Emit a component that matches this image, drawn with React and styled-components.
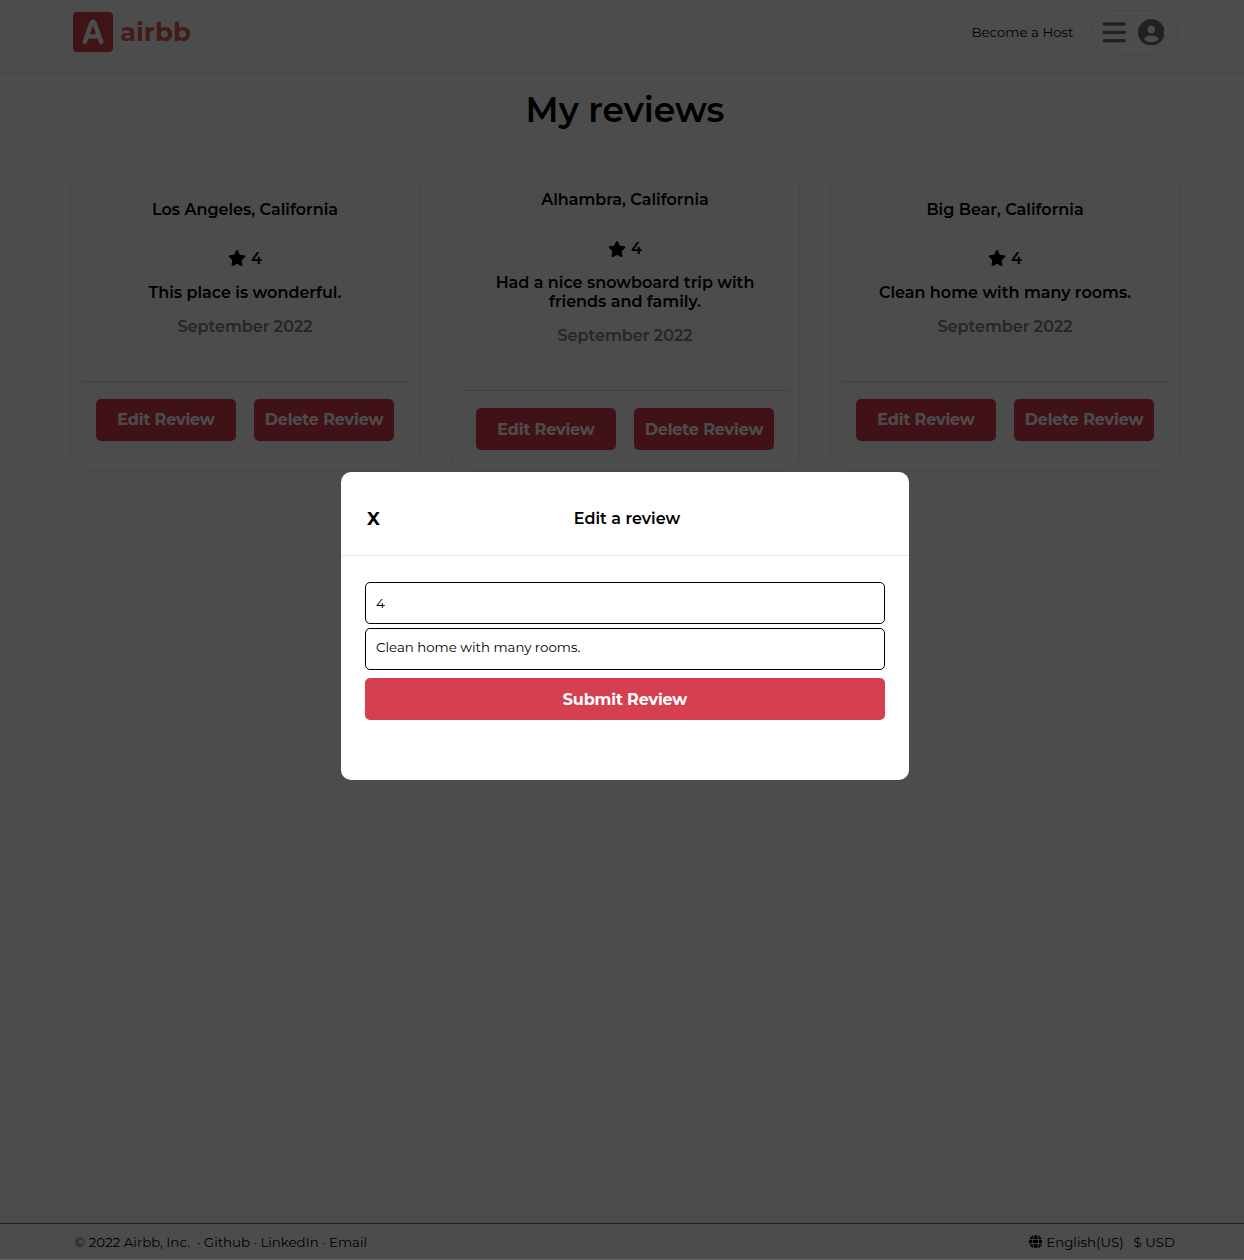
import React from "react";
import styled, { createGlobalStyle } from "styled-components";
import { FaBars, FaCircleUser, FaGlobe, FaStar } from "react-icons/fa6";

const fontStack = `Montserrat, Inter, "Liberation Sans", sans-serif`;

const GlobalStyle = createGlobalStyle`
  *, *::before, *::after { box-sizing: border-box; }
  html { overflow: hidden; }
  body {
    margin: 0;
    background: #666;
    color: #000;
    font-family: ${fontStack};
  }
  h1, h2, p { margin: 0; }
`;

const Page = styled.div`
  display: flex;
  flex-direction: column;
  width: 1250px;
  height: 1259px;
  background: #fff;
`;

const Header = styled.header`
  display: flex;
  justify-content: space-between;
  align-items: flex-start;
  height: 73px;
  padding: 10px 72px 0 73px;
  border-bottom: 1px solid #e9e9e9;
`;

const Brand = styled.a`
  display: flex;
  align-items: center;
  gap: 7px;
  height: 40px;
  margin-top: 2px;
  color: #dc5f58;
  font-size: 26px;
  font-weight: 700;
  line-height: 40px;
`;

const HeaderActions = styled.div`
  display: flex;
  gap: 10px;
`;

const HostLink = styled.button`
  display: flex;
  align-items: center;
  justify-content: center;
  width: 115px;
  height: 46px;
  padding: 0 0 2px;
  border: 0;
  border-radius: 20px;
  box-shadow: 0 1px 0 #efefef;
  background: transparent;
  color: #000;
  font: 400 13.33px ${fontStack};
`;

const UserMenu = styled.button`
  display: flex;
  align-items: center;
  gap: 10px;
  width: 88px;
  height: 45px;
  padding: 0 0 1px 10px;
  border: 1px solid #ebebeb;
  border-radius: 23px;
  background: transparent;
  color: #717171;
  font-size: 26.67px;
`;

const Main = styled.main`
  flex: 1;
`;

const Title = styled.h1`
  padding-top: 15px;
  font-size: 34.67px;
  font-weight: 600;
  line-height: 43px;
  text-align: center;
`;

const Reviews = styled.section`
  display: grid;
  grid-template-columns: repeat(3, 350px);
  justify-content: center;
  gap: 30px;
  margin-top: 40px;
`;

const Card = styled.article`
  display: flex;
  flex-direction: column;
  align-items: center;
  justify-content: center;
  height: 300px;
  padding: 0 10px 1.4px;
  border: 1px solid #ececec;
  border-radius: 15px;
  font-size: 16px;
  font-weight: 600;
  line-height: 19px;
  text-align: center;
`;

const Place = styled.h2`
  font-size: 16px;
  font-weight: 600;
`;

const Rating = styled.div`
  display: flex;
  align-items: center;
  gap: 5px;
  height: 19px;
  margin-top: 30px;

  svg { width: 18px; height: 16px; }
`;

const ReviewText = styled.p`
  width: 280px;
  margin: 15px 0;
`;

const ReviewDate = styled.p`
  color: #808080;
`;

const CardActions = styled.div`
  display: flex;
  justify-content: center;
  gap: 18px;
  width: 100%;
  margin-top: 45px;
  padding-top: 17px;
  border-top: 1px solid #dadada;
`;

const Button = styled.button`
  display: flex;
  align-items: center;
  justify-content: center;
  width: ${(p) => (p.$wide ? "100%" : "140px")};
  height: 42px;
  padding: 0;
  border: 0;
  border-radius: 5px;
  background: #d63f4f;
  color: #fff;
  font: 700 16px/19px ${fontStack};
  letter-spacing: -0.15px;
`;

const Footer = styled.footer`
  display: flex;
  justify-content: space-between;
  height: 36px;
  padding: 1px 75px 0 74.5px;
  border-top: 1px solid #6b6b6b;
  font-size: 13.33px;
`;

const FooterGroup = styled.div`
  display: flex;
  align-items: center;
  gap: ${(p) => p.$gap}px;
`;

const Dot = styled.span`
  margin-left: ${(p) => p.$lead || 0}px;
  width: 3px;
  text-align: center;
`;

const Backdrop = styled.div`
  position: fixed;
  top: 0;
  left: 0;
  display: flex;
  justify-content: center;
  align-items: center;
  width: 1250px;
  height: 1259px;
  padding-bottom: 7px;
  background: rgba(0, 0, 0, 0.7);
`;

const Modal = styled.div`
  width: 568px;
  height: 308px;
  border-radius: 10px;
  background: #fff;
`;

const ModalHeader = styled.div`
  display: grid;
  grid-template-columns: 40px 1fr 40px;
  align-items: center;
  height: 84px;
  padding: 9px 24px 0 26px;
  border-bottom: 1px solid #e6e6e6;
`;

const Close = styled.button`
  padding: 1px 0 0;
  border: 0;
  background: none;
  color: #000;
  font: 700 18px ${fontStack};
  text-align: left;
`;

const ModalTitle = styled.h2`
  padding-left: 2px;
  font-size: 16px;
  font-weight: 600;
  text-align: center;
`;

const Form = styled.div`
  display: flex;
  flex-direction: column;
  gap: 4px;
  padding: 26px 24px 0;
`;

const Field = styled.input`
  height: 42px;
  padding: ${(p) => (p.$raised ? "0 10px 4px" : "0 10px")};
  border: 1px solid #000;
  border-radius: 5px;
  background: #fff;
  color: #000;
  font: 400 13.33px ${fontStack};
  outline: 0;
`;

const Submit = styled.div`
  margin-top: 4px;
`;

const reviews = [
  { place: "Los Angeles, California", text: "This place is wonderful." },
  { place: "Alhambra, California", text: "Had a nice snowboard trip with friends and family." },
  { place: "Big Bear, California", text: "Clean home with many rooms." },
];

function Logo() {
  return (
    <svg width="40" height="40" viewBox="0 0 40 40">
      <rect width="40" height="40" rx="4" fill="#d2434b" />
      <path
        d="M11.8 29.9 18.2 11.8Q19.9 7.6 21.7 11.8L28.2 29.9M14.5 24.5H25.5"
        fill="none"
        stroke="#fff"
        strokeWidth="4.6"
        strokeLinecap="round"
        strokeLinejoin="round"
      />
    </svg>
  );
}

function ReviewCard({ review }) {
  return (
    <Card>
      <Place>{review.place}</Place>
      <Rating><FaStar /><span>4</span></Rating>
      <ReviewText>{review.text}</ReviewText>
      <ReviewDate>September 2022</ReviewDate>
      <CardActions>
        <Button>Edit Review</Button>
        <Button>Delete Review</Button>
      </CardActions>
    </Card>
  );
}

export default function App() {
  return (
    <>
      <GlobalStyle />
      <Page>
        <Header>
          <Brand><Logo /><span>airbb</span></Brand>
          <HeaderActions>
            <HostLink>Become a Host</HostLink>
            <UserMenu><FaBars /><FaCircleUser /></UserMenu>
          </HeaderActions>
        </Header>
        <Main>
          <Title>My reviews</Title>
          <Reviews>
            {reviews.map((r) => <ReviewCard key={r.place} review={r} />)}
          </Reviews>
        </Main>
        <Footer>
          <FooterGroup $gap={3.7}>
            <span>© 2022 Airbb, Inc.</span>
            <Dot $lead={3.5}>·</Dot>
            <span>Github</span>
            <Dot>·</Dot>
            <span>LinkedIn</span>
            <Dot>·</Dot>
            <span>Email</span>
          </FooterGroup>
          <FooterGroup $gap={10}>
            <FooterGroup $gap={4}><FaGlobe /><span>English(US)</span></FooterGroup>
            <span>$ USD</span>
          </FooterGroup>
        </Footer>
      </Page>
      <Backdrop>
        <Modal>
          <ModalHeader>
            <Close>X</Close>
            <ModalTitle>Edit a review</ModalTitle>
          </ModalHeader>
          <Form>
            <Field defaultValue="4" />
            <Field $raised defaultValue="Clean home with many rooms." />
            <Submit><Button $wide>Submit Review</Button></Submit>
          </Form>
        </Modal>
      </Backdrop>
    </>
  );
}
